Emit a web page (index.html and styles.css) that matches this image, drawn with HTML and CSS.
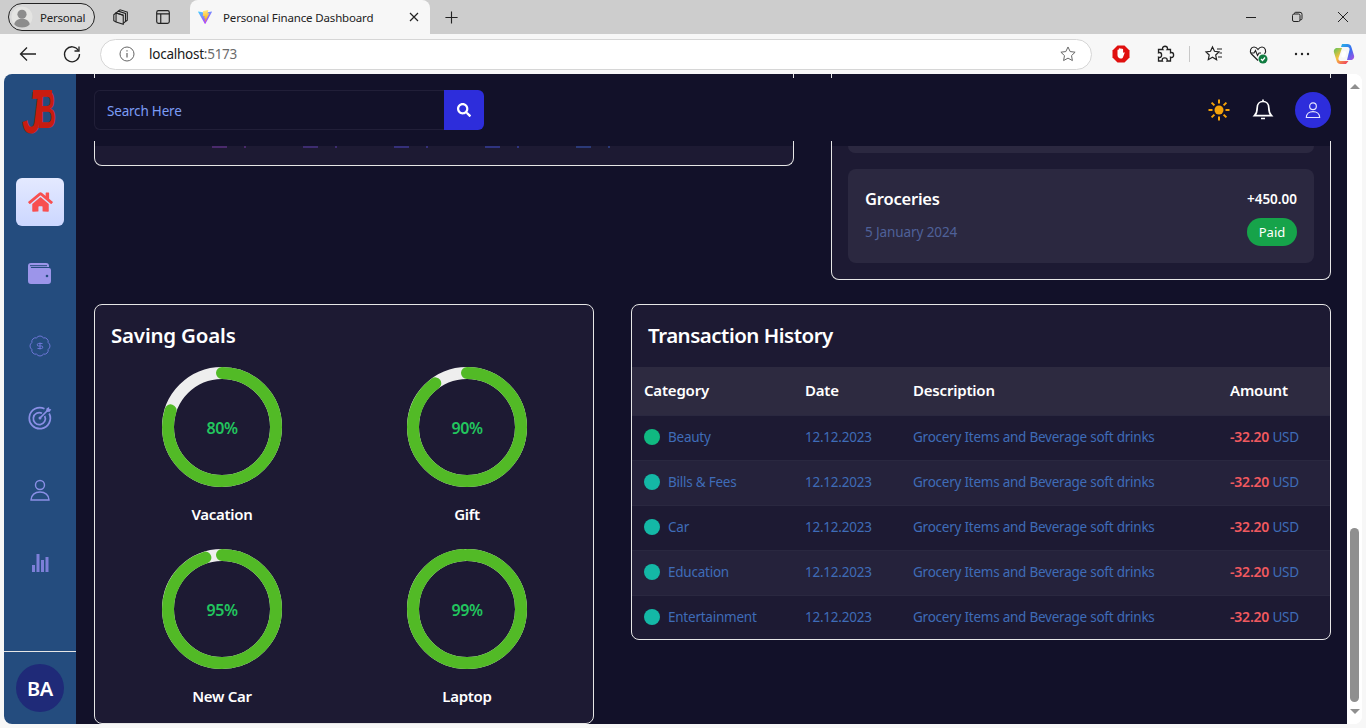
FILE: index.html
```html
<!DOCTYPE html>
<html>
<head>
    <title>Personal Finance Dashboard</title>
    <link rel="stylesheet" href="styles.css">
</head>
<body>
    <div class="tabstrip">
        <div class="profile">
            <svg class="profile-pic" viewBox="0 0 24 24"><circle cx="12" cy="12" r="11.5" fill="#e4e4e2"/><circle cx="12" cy="9" r="5" fill="#8c8c8c"/><path d="M3.5 20c1-4.500 4.500-6 8.500-6s7.500 1.500 8.500 6c-2 2.300-5 3.500-8.500 3.500s-6.500-1.200-8.500-3.500z" fill="#8c8c8c"/></svg>
            <span>Personal</span>
        </div>
        <svg class="strip-icon first" viewBox="0 0 20 20" fill="none" stroke="#222" stroke-width="1.200"><path d="M7 3.500l2-1.500 8 2.500v9l-2 1.500"/><path d="M4.500 5.500l2.500-2 8 2.500v9l-2.500 2"/><path d="M2 7.500l2.500-2 8 2.500v10l-8-2.500-2.500-1.500z"/><path d="M12.500 8l-8-2.500v10"/></svg>
        <svg class="strip-icon second" viewBox="0 0 20 20" fill="none" stroke="#222" stroke-width="1.300"><rect x="3" y="3" width="14" height="14" rx="2"/><path d="M3 6.500h14M7.500 6.500V17"/></svg>
        <div class="tab">
            <svg class="vite" viewBox="0 0 32 32">
                <defs>
                    <linearGradient id="viteA" x1="0" y1="0" x2="0.6" y2="1"><stop offset="0" stop-color="#41d1ff"/><stop offset="1" stop-color="#bd34fe"/></linearGradient>
                    <linearGradient id="viteB" x1="0.4" y1="0" x2="0.5" y2="1"><stop offset="0" stop-color="#ffea83"/><stop offset="1" stop-color="#ffa800"/></linearGradient>
                </defs>
                <path fill="url(#viteA)" d="M29.880 6.146 16.810 29.510a.71.71 0 0 1-1.240.005L2.240 6.150a.71.71 0 0 1 .74-1.050l13.080 2.340a.71.71 0 0 0 .25 0L29.140 5.100a.71.71 0 0 1 .74 1.050Z"/>
                <path fill="url(#viteB)" d="M22.264 2.007 12.540 3.912a.357.357 0 0 0-.288.33l-.598 10.104a.357.357 0 0 0 .437.369l2.707-.625c.254-.058.484.165.432.42l-.804 3.939a.357.357 0 0 0 .453.413l1.672-.508c.26-.079.509.15.454.415l-1.279 6.187c-.08.387.435.598.65.266l.143-.222 7.925-15.815c.133-.265-.096-.567-.387-.51l-2.787.537a.357.357 0 0 1-.41-.45l1.818-6.306a.357.357 0 0 0-.414-.45Z"/>
            </svg>
            <span class="tab-title">Personal Finance Dashboard</span>
            <svg class="tab-close" viewBox="0 0 12 12" fill="none" stroke="#222" stroke-width="1.200"><path d="M2 2l8 8M10 2l-8 8"/></svg>
        </div>
        <svg class="new-tab" viewBox="0 0 16 16" fill="none" stroke="#222" stroke-width="1.200"><path d="M8 1.500v13M1.500 8h13"/></svg>
        <div class="win-controls">
            <div class="win-btn"><svg viewBox="0 0 12 12" fill="none" stroke="#222"><path d="M1 6.500h10"/></svg></div>
            <div class="win-btn"><svg viewBox="0 0 12 12" fill="none" stroke="#222"><rect x="1.500" y="3" width="7.500" height="7.500" rx="1.500"/><path d="M3.500 3V2.500a1.200 1.200 0 0 1 1.200-1.200h4.300a2 2 0 0 1 2 2v4.300a1.200 1.200 0 0 1-1.200 1.200H9"/></svg></div>
            <div class="win-btn"><svg viewBox="0 0 12 12" fill="none" stroke="#222"><path d="M1 1l10 10M11 1L1 11"/></svg></div>
        </div>
    </div>

    <div class="toolbar">
        <div class="tool-btn"><svg viewBox="0 0 20 20" fill="none" stroke="#222" stroke-width="1.300"><path d="M18 10H2.500M9 3.500L2.500 10 9 16.500"/></svg></div>
        <div class="tool-btn"><svg viewBox="0 0 20 20" fill="none" stroke="#222" stroke-width="1.300"><path d="M16.500 6.500A7.500 7.500 0 1 0 17.500 10"/><path d="M17 2.500v4.500h-4.500"/></svg></div>
        <div class="address">
            <svg class="info" viewBox="0 0 16 16" fill="none" stroke="#666" stroke-width="1"><circle cx="8" cy="8" r="7"/><path d="M8 7v4.500" stroke-width="1.200"/><path d="M8 4.300v1.200" stroke-width="1.200"/></svg>
            <span class="host">localhost<span class="port">:5173</span></span>
            <svg class="star" viewBox="0 0 20 20" fill="none" stroke="#666" stroke-width="1.100"><path d="M10 2.200l2.400 5.100 5.500.7-4 3.800 1 5.500-4.900-2.700-4.900 2.700 1-5.500-4-3.800 5.500-.7z"/></svg>
        </div>
        <div class="tool-group">
            <div class="tool-btn"><svg viewBox="0 0 20 20"><path fill="#e0100f" d="M6.500 1.500h7l5 5v7l-5 5h-7l-5-5v-7z"/><path fill="#fff" d="M6.500 9.500V6.200c0-1 1.300-1 1.300 0V5c0-1 1.400-1 1.400 0 0-1 1.500-1 1.500 0v.5c0-1 1.400-1 1.400 0V9c.5-1 1.800-1.200 1.500 0l-1.500 4c-.4 1-1 1.500-2.200 1.500H9.500c-1.500 0-3-1.500-3-3.200z"/></svg></div>
            <div class="tool-btn"><svg viewBox="0 0 20 20" fill="none" stroke="#222" stroke-width="1.300"><path d="M7.500 4.500c0-3 5-3 5 0 0 .5 0 .8-.2 1h3.200v3.200c.3-.2.6-.2 1-.2 2.800 0 2.800 5 0 5-.4 0-.7 0-1-.2v3.700h-3.500c.2-.3.2-.6.2-1 0-2.800-5-2.800-5 0 0 .4 0 .7.2 1H3.500v-3.700c.3.2.6.2 1 .2 2.800 0 2.800-5 0-5-.4 0-.7 0-1 .2V5.500h4.200c-.2-.2-.2-.5-.2-1z"/></svg></div>
            <span class="tool-sep"></span>
            <div class="tool-btn"><svg viewBox="0 0 20 20" fill="none" stroke="#222" stroke-width="1.200"><path d="M8.500 3l2 4.300 4.500.6-3.300 3.100.9 4.700-4.100-2.400-4.200 2.400.9-4.700L2 7.900l4.500-.6z"/><path d="M13 5h5M15.500 9H18M14 13h4"/></svg></div>
            <div class="tool-btn"><svg viewBox="0 0 20 20"><path fill="none" stroke="#222" stroke-width="1.200" d="M10 16.500L3.500 10C1 7 3 3 6 3c1.800 0 3 1 4 2.500C11 4 12.200 3 14 3c3 0 5 4 2.500 7"/><path fill="none" stroke="#222" stroke-width="1.100" d="M2.500 9h3.500l1.500-2.500 2 5 1.500-2.500h2"/><circle cx="15" cy="15" r="4.500" fill="#107c41"/><path fill="none" stroke="#fff" stroke-width="1.200" d="M13 15l1.500 1.500 2.500-3"/></svg></div>
            <div class="tool-btn"><svg viewBox="0 0 20 20" fill="#222"><circle cx="4" cy="10" r="1.200"/><circle cx="10" cy="10" r="1.200"/><circle cx="16" cy="10" r="1.200"/></svg></div>
            <div class="tool-btn last">
                <svg class="copilot" viewBox="0 0 22 22">
                    <defs>
                        <linearGradient id="copA" x1="0" y1="0" x2="1" y2="1"><stop offset="0" stop-color="#27b4e6"/><stop offset="0.55" stop-color="#3a6cf0"/><stop offset="1" stop-color="#b34fe0"/></linearGradient>
                        <linearGradient id="copB" x1="0" y1="0" x2="0.8" y2="1"><stop offset="0" stop-color="#5cc25a"/><stop offset="0.5" stop-color="#f6c23c"/><stop offset="1" stop-color="#f0485e"/></linearGradient>
                    </defs>
                    <path fill="url(#copA)" d="M9 1h5.500c2 0 3.200 1 3.800 2.800L21 12.500c.7 2.500-1 4.500-3.300 4.500H14l2.500-10c.4-1.600-.5-3-2-3H8z"/>
                    <path fill="url(#copB)" d="M13 21H7.500c-2 0-3.200-1-3.800-2.800L1 9.500C.3 7 2 5 4.300 5H9L5.500 15c-.5 1.600.5 3 2 3h8z"/>
                    <path fill="#fff" d="M11 8c1.500 0 2.400.9 2.200 2.300l-.5 2.400c-.3 1.300-1.200 1.900-2.400 1.900-1.500 0-2.200-1.100-2-2.400l.5-2.300C9 8.700 9.900 8 11 8z" opacity="0.9"/>
                </svg>
            </div>
        </div>
    </div>

    <div class="window">
        <aside class="sidebar">
            <div class="logo">
                <svg class="logo-mark" viewBox="0 0 36 50" fill="#c81c10">
                    <rect x="11" y="1" width="19" height="4"/>
                    <text class="logo-j" transform="translate(0,44) scale(0.62,1)">J</text>
                    <text class="logo-b" transform="translate(15,39) scale(0.5,1)">B</text>
                </svg>
            </div>
            <nav class="nav">
                <a class="nav-item active"><svg class="home-icon" viewBox="0 0 576 512" fill="#f84f50"><path d="M280.370 148.260L96 300.110V464a16 16 0 0 0 16 16l112.060-.29a16 16 0 0 0 15.920-16V368a16 16 0 0 1 16-16h64a16 16 0 0 1 16 16v95.640a16 16 0 0 0 16 16.050L464 480a16 16 0 0 0 16-16V300L295.670 148.260a12.190 12.190 0 0 0-15.300 0zM571.600 251.470L488 182.560V44.050a12 12 0 0 0-12-12h-56a12 12 0 0 0-12 12v72.610L318.470 43a48 48 0 0 0-61 0L4.340 251.470a12 12 0 0 0-1.600 16.900l25.500 31A12 12 0 0 0 45.150 301l235.220-193.740a12.190 12.190 0 0 1 15.300 0L530.900 301a12 12 0 0 0 16.900-1.600l25.500-31a12 12 0 0 0-1.700-16.930z"/></svg></a>
                <a class="nav-item"><svg class="nav-icon" viewBox="0 0 24 24"><path fill="#9c95ea" d="M3 1h15a3 3 0 0 1 3 3v1H3a1 1 0 0 0 0 1h18a2 2 0 0 1 2 2v11a3 3 0 0 1-3 3H3a3 3 0 0 1-3-3V4a3 3 0 0 1 3-3z"/><path fill="#244c7e" d="M2 3.200h17v1H2z"/><circle cx="19" cy="14" r="1.300" fill="#244c7e"/></svg></a>
                <a class="nav-item"><svg class="nav-icon" viewBox="0 0 24 24" fill="none" stroke="#6d76d6" stroke-width="1"><path d="M3.850 8.620a4 4 0 0 1 4.780-4.770 4 4 0 0 1 6.740 0 4 4 0 0 1 4.780 4.780 4 4 0 0 1 0 6.740 4 4 0 0 1-4.770 4.780 4 4 0 0 1-6.750 0 4 4 0 0 1-4.780-4.770 4 4 0 0 1 0-6.760Z"/><path d="M14.500 9.500h-4a1.200 1.200 0 1 0 0 2.500h3a1.200 1.200 0 1 1 0 2.500H9.500"/><path d="M12 15.500v-7"/></svg></a>
                <a class="nav-item"><svg class="nav-icon" viewBox="0 0 24 24" fill="none" stroke="#8a8fe6" stroke-width="1.700"><path d="M16.500 2.800A10.500 10.500 0 1 0 21.200 7.500"/><path d="M14 7.300A6 6 0 1 0 16.700 10"/><circle cx="12" cy="12" r="1.500" fill="#8a8fe6" stroke="none"/><path d="M12 12l8-8"/><path d="M18 6l.5-3.500L21 1l.300 2 2 .3-1.500 2.500z" fill="#8a8fe6" stroke="none"/></svg></a>
                <a class="nav-item"><svg class="nav-icon" viewBox="0 0 24 24" fill="none" stroke="#8a8fe6" stroke-width="1.400"><circle cx="12" cy="7" r="4.500"/><path d="M3 22c0-5 4-8 9-8s9 3 9 8z"/></svg></a>
                <a class="nav-item"><svg class="nav-icon" viewBox="0 0 24 24" fill="#7d7fd8"><rect x="4" y="15" width="3" height="7"/><rect x="8.500" y="4" width="3" height="18"/><rect x="13" y="10" width="3" height="12"/><rect x="17.500" y="7" width="3" height="15"/></svg></a>
            </nav>
            <div class="side-foot"><div class="side-avatar">BA</div></div>
        </aside>

        <div class="main">
            <header class="topbar">
                <span class="edge edge-a"></span>
                <span class="edge edge-b"></span>
                <span class="edge edge-c"></span>
                <span class="edge edge-d"></span>
                <div class="search">
                    <div class="search-input">Search Here</div>
                    <div class="search-btn"><svg viewBox="0 0 512 512" fill="#fff"><path d="M505 442.700L405.300 343c-4.500-4.500-10.600-7-17-7H372c27.600-35.300 44-79.700 44-128C416 93.100 322.900 0 208 0S0 93.100 0 208s93.100 208 208 208c48.300 0 92.700-16.400 128-44v16.300c0 6.400 2.500 12.500 7 17l99.700 99.700c9.400 9.400 24.600 9.400 33.900 0l28.300-28.300c9.400-9.400 9.400-24.600.1-34zM208 336c-70.700 0-128-57.200-128-128 0-70.700 57.200-128 128-128 70.700 0 128 57.200 128 128 0 70.700-57.200 128-128 128z"/></svg></div>
                </div>
                <div class="top-actions">
                    <svg class="top-icon" viewBox="0 0 24 24" stroke="#f5a30a" stroke-width="2" fill="#f5a30a"><circle cx="12" cy="12" r="4.500" stroke="none"/><path d="M12 1.500v4M12 18.500v4M1.500 12h4M18.500 12h4M4.600 4.600l2.800 2.800M16.600 16.600l2.800 2.800M4.600 19.400l2.800-2.800M16.600 7.400l2.800-2.800"/></svg>
                    <svg class="top-icon" viewBox="0 0 24 24" fill="none" stroke="#fff" stroke-width="1.700"><path d="M12 3.500c-3.500 0-5.800 2.700-5.800 6.200 0 4-1 6.200-2.700 8h17c-1.700-1.800-2.700-4-2.700-8 0-3.500-2.300-6.200-5.800-6.200z"/><path d="M12 1.500v2M10 20.500h4"/></svg>
                    <div class="top-avatar"><svg viewBox="0 0 24 24" fill="none" stroke="#e6e6ff" stroke-width="1.400"><circle cx="12" cy="7.500" r="4"/><path d="M4 21c0-4.500 3.500-7 8-7s8 2.500 8 7z"/></svg></div>
                </div>
            </header>

            <main class="content">
                <div class="row row-top">
                    <section class="card chart-stub">
                        <div class="stub-marks">
                            <span class="mark m1"></span><span class="mark m2"></span><span class="mark m3"></span><span class="mark m4"></span><span class="mark m5"></span>
                        </div>
                    </section>
                    <section class="card bills">
                        <div class="bill-cut"></div>
                        <div class="bill">
                            <div class="bill-line">
                                <span class="bill-name">Groceries</span>
                                <span class="bill-amount">+450.00</span>
                            </div>
                            <div class="bill-line">
                                <span class="bill-date">5 January 2024</span>
                                <span class="pill">Paid</span>
                            </div>
                        </div>
                    </section>
                </div>

                <div class="row row-bottom">
                    <section class="card goals">
                        <h2 class="goals-title">Saving Goals</h2>
                        <div class="goal-grid">
                            <div class="goal">
                                <div class="ring">
                                    <svg viewBox="0 0 120 120"><circle class="ring-bg" cx="60" cy="60" r="54"/><circle class="ring-fg" cx="60" cy="60" r="54" pathLength="100" stroke-dasharray="80 100"/></svg>
                                    <span class="ring-val">80%</span>
                                </div>
                                <div class="goal-name">Vacation</div>
                            </div>
                            <div class="goal">
                                <div class="ring">
                                    <svg viewBox="0 0 120 120"><circle class="ring-bg" cx="60" cy="60" r="54"/><circle class="ring-fg" cx="60" cy="60" r="54" pathLength="100" stroke-dasharray="90 100"/></svg>
                                    <span class="ring-val">90%</span>
                                </div>
                                <div class="goal-name">Gift</div>
                            </div>
                            <div class="goal">
                                <div class="ring">
                                    <svg viewBox="0 0 120 120"><circle class="ring-bg" cx="60" cy="60" r="54"/><circle class="ring-fg" cx="60" cy="60" r="54" pathLength="100" stroke-dasharray="95 100"/></svg>
                                    <span class="ring-val">95%</span>
                                </div>
                                <div class="goal-name">New Car</div>
                            </div>
                            <div class="goal">
                                <div class="ring">
                                    <svg viewBox="0 0 120 120"><circle class="ring-bg" cx="60" cy="60" r="54"/><circle class="ring-fg" cx="60" cy="60" r="54" pathLength="100" stroke-dasharray="99 100"/></svg>
                                    <span class="ring-val">99%</span>
                                </div>
                                <div class="goal-name">Laptop</div>
                            </div>
                        </div>
                    </section>

                    <section class="card history">
                        <h2 class="history-title">Transaction History</h2>
                        <table class="tx-table">
                            <colgroup>
                                <col class="col-cat"><col class="col-date"><col class="col-desc"><col class="col-amt">
                            </colgroup>
                            <thead>
                                <tr><th>Category</th><th>Date</th><th>Description</th><th>Amount</th></tr>
                            </thead>
                            <tbody>
                                <tr>
                                    <td><span class="dot dot-green"></span>Beauty</td>
                                    <td>12.12.2023</td>
                                    <td>Grocery Items and Beverage soft drinks</td>
                                    <td><b class="neg">-32.20</b> USD</td>
                                </tr>
                                <tr>
                                    <td><span class="dot"></span>Bills &amp; Fees</td>
                                    <td>12.12.2023</td>
                                    <td>Grocery Items and Beverage soft drinks</td>
                                    <td><b class="neg">-32.20</b> USD</td>
                                </tr>
                                <tr>
                                    <td><span class="dot"></span>Car</td>
                                    <td>12.12.2023</td>
                                    <td>Grocery Items and Beverage soft drinks</td>
                                    <td><b class="neg">-32.20</b> USD</td>
                                </tr>
                                <tr>
                                    <td><span class="dot"></span>Education</td>
                                    <td>12.12.2023</td>
                                    <td>Grocery Items and Beverage soft drinks</td>
                                    <td><b class="neg">-32.20</b> USD</td>
                                </tr>
                                <tr>
                                    <td><span class="dot"></span>Entertainment</td>
                                    <td>12.12.2023</td>
                                    <td>Grocery Items and Beverage soft drinks</td>
                                    <td><b class="neg">-32.20</b> USD</td>
                                </tr>
                            </tbody>
                        </table>
                    </section>
                </div>
            </main>
        </div>

        <div class="scrollbar">
            <span class="arrow-up"></span>
            <span class="thumb"></span>
            <span class="arrow-down"></span>
        </div>
    </div>
</body>
</html>
```

FILE: styles.css
```css
* {
    box-sizing: border-box;
}

html, body {
    margin: 0;
    height: 728px;
    overflow: hidden;
}

body {
    font-family: "Noto Sans", "Open Sans", sans-serif;
    background-color: #f7f7f7;
    color: #fff;
    display: flex;
    flex-direction: column;
}

/* browser chrome */
.tabstrip {
    height: 34px;
    flex: none;
    background-color: #cdcdcd;
    display: flex;
    align-items: center;
    color: #222;
    font-size: 11.5px;
    letter-spacing: -0.15px;
}

.profile {
    width: 87px;
    height: 28px;
    margin-left: 8px;
    border: 1px solid #222;
    border-radius: 14px;
    display: flex;
    align-items: center;
    gap: 7px;
    padding-left: 2px;
    background-color: #d8d8d8;
    letter-spacing: -0.25px;
}

.profile-pic {
    width: 22px;
    height: 22px;
}

.strip-icon {
    width: 18px;
    height: 18px;
}

.strip-icon.first {
    margin-left: 17px;
}

.strip-icon.second {
    margin-left: 24px;
}

.tab {
    width: 240px;
    height: 34px;
    margin-left: 18px;
    background-color: #f7f7f7;
    border-radius: 8px 8px 0 0;
    display: flex;
    align-items: center;
    padding-left: 7px;
}

.vite {
    width: 16px;
    height: 16px;
}

.tab-title {
    margin-left: 10px;
    flex: 1;
}

.tab-close {
    width: 12px;
    height: 12px;
    margin-right: 10px;
}

.new-tab {
    width: 15px;
    height: 15px;
    margin-left: 14px;
}

.win-controls {
    margin-left: auto;
    display: flex;
}

.win-btn {
    width: 46px;
    height: 34px;
    display: flex;
    align-items: center;
    justify-content: center;
}

.win-btn svg {
    width: 12px;
    height: 12px;
}

.toolbar {
    height: 40px;
    flex: none;
    background-color: #f7f7f7;
    display: flex;
    align-items: center;
    padding: 0 2px 0 6px;
}

.tool-btn {
    width: 44px;
    height: 32px;
    display: flex;
    align-items: center;
    justify-content: center;
}

.tool-btn svg {
    width: 20px;
    height: 20px;
}

.tool-btn .copilot {
    width: 22px;
    height: 22px;
}

.tool-btn.last {
    width: 40px;
}

.address {
    flex: 1;
    height: 31px;
    margin-left: 6px;
    background-color: #fff;
    border: 1px solid #d6d6d6;
    border-radius: 16px;
    display: flex;
    align-items: center;
    padding: 0 14px 0 18px;
    font-size: 13.5px;
    letter-spacing: -0.25px;
    color: #1a1a1a;
}

.info {
    width: 16px;
    height: 16px;
}

.host {
    margin-left: 14px;
    flex: 1;
}

.port {
    color: #6b6b6b;
}

.star {
    width: 18px;
    height: 18px;
}

.tool-group {
    display: flex;
    align-items: center;
    margin-left: 7px;
}

.tool-sep {
    width: 1px;
    height: 16px;
    margin: 0 2px;
    background-color: #c8c8c8;
}

/* page */
.window {
    height: 650px;
    flex: none;
    margin: 0 4px;
    display: flex;
    background-color: #fff;
    border-radius: 8px;
    overflow: hidden;
}

.sidebar {
    width: 72px;
    flex: none;
    background-color: #244c7e;
    display: flex;
    flex-direction: column;
}

.logo {
    height: 104px;
    padding-top: 15px;
    display: flex;
    justify-content: center;
}

.logo-mark {
    width: 36px;
    height: 50px;
    overflow: visible;
}

.logo-j,
.logo-b {
    font-family: "Liberation Sans", sans-serif;
    font-weight: 700;
}

.logo-j {
    font-size: 60px;
    font-style: italic;
}

.logo-b {
    font-size: 53px;
}

.nav {
    display: flex;
    flex-direction: column;
    gap: 24px;
    padding: 0 12px;
}

.nav-item {
    height: 48px;
    display: flex;
    align-items: center;
    justify-content: center;
    border-radius: 6px;
}

.nav-item.active {
    background: linear-gradient(#e4e9ff, #ccd7ff);
}

.home-icon {
    width: 25px;
    height: 22px;
}

.nav-icon {
    width: 24px;
    height: 24px;
}

.side-foot {
    margin-top: auto;
    border-top: 1px solid #e6e6e6;
    padding: 12px;
}

.side-avatar {
    width: 48px;
    height: 48px;
    border-radius: 50%;
    background-color: #1f2a78;
    display: flex;
    align-items: center;
    justify-content: center;
    font-size: 20px;
    font-weight: 600;
    letter-spacing: -0.3px;
}

.main {
    flex: 1;
    min-width: 0;
    background-color: #121129;
    display: flex;
    flex-direction: column;
}

.topbar {
    height: 72px;
    flex: none;
    position: relative;
    display: flex;
    align-items: center;
    justify-content: space-between;
    padding: 0 16px 0 18px;
}

/* card borders peeking out above and below the sticky bar */
.edge {
    position: absolute;
    top: 0;
    width: 1px;
    height: 72px;
    background: linear-gradient(#e6e6e6 0 4px, transparent 4px 67px, #e6e6e6 67px);
}

.edge-a { left: 18px; }
.edge-b { left: 717px; }
.edge-c { left: 755px; }
.edge-d { left: 1254px; }

.search {
    display: flex;
    width: 390px;
    height: 40px;
}

.search-input {
    flex: 1;
    border: 1px solid #211f38;
    border-right: none;
    border-radius: 6px 0 0 6px;
    padding: 2px 0 0 12px;
    display: flex;
    align-items: center;
    font-size: 13.5px;
    letter-spacing: -0.2px;
    color: #7c9cf5;
}

.search-btn {
    width: 40px;
    background-color: #2d2ddb;
    border-radius: 0 6px 6px 0;
    display: flex;
    align-items: center;
    justify-content: center;
}

.search-btn svg {
    width: 14px;
    height: 14px;
}

.top-actions {
    display: flex;
    align-items: center;
    gap: 20px;
}

.top-icon {
    width: 24px;
    height: 24px;
}

.top-avatar {
    width: 36px;
    height: 36px;
    border-radius: 50%;
    background-color: #2d2ddb;
    display: flex;
    align-items: center;
    justify-content: center;
}

.top-avatar svg {
    width: 20px;
    height: 20px;
}

.content {
    padding: 0 16px 0 18px;
    display: flex;
    flex-direction: column;
    gap: 24px;
}

.row {
    display: grid;
    gap: 37px;
    align-items: start;
}

.row-top {
    grid-template-columns: 700px 500px;
}

.row-bottom {
    grid-template-columns: 500px 700px;
}

.card {
    background-color: #1d1a33;
    border: 1px solid #e6e6e6;
    border-radius: 8px;
}

.chart-stub {
    height: 20px;
    border-top: none;
    border-radius: 0 0 8px 8px;
}

.stub-marks {
    display: flex;
    gap: 57px;
    padding-left: 117px;
}

.mark {
    --mark: #4a2a6c;
    width: 34px;
    height: 2px;
    background: linear-gradient(to right, var(--mark) 0 15px, transparent 15px 32px, var(--mark) 32px);
}

.mark.m2 { --mark: #3d2c70; }
.mark.m3 { --mark: #35307a; }
.mark.m4 { --mark: #2f3480; }
.mark.m5 { --mark: #2b3a78; }

.bills {
    height: 134px;
    border-top: none;
    border-radius: 0 0 8px 8px;
    padding: 0 16px;
}

.bill-cut {
    height: 7px;
    background-color: #2b2840;
    border-radius: 0 0 8px 8px;
}

.bill {
    margin-top: 16px;
    height: 94px;
    background-color: #2b2840;
    border-radius: 8px;
    padding: 17px;
    display: flex;
    flex-direction: column;
    justify-content: space-between;
}

.bill-line {
    display: flex;
    align-items: center;
    justify-content: space-between;
}

.bill-name {
    line-height: 26px;
    font-size: 16.5px;
    font-weight: 600;
    letter-spacing: -0.2px;
}

.bill-amount {
    font-size: 13.5px;
    font-weight: 600;
}

.bill-date {
    font-size: 13.5px;
    letter-spacing: -0.1px;
    color: #4f6199;
}

.pill {
    width: 50px;
    height: 28px;
    border-radius: 14px;
    background-color: #16a34a;
    display: flex;
    align-items: center;
    justify-content: center;
    font-size: 13px;
}

.goals {
    height: 420px;
    padding: 16px;
}

.goals-title,
.history-title {
    margin: 0;
    height: 30px;
    line-height: 29px;
    font-weight: 600;
}

.goals-title {
    font-size: 20.5px;
    letter-spacing: -0.2px;
}

.history-title {
    font-size: 20.5px;
    letter-spacing: -0.5px;
    margin: 16px;
}

.goal-grid {
    margin-top: 16px;
    display: grid;
    grid-template-columns: 222px 222px;
    gap: 24px 23px;
}

.goal {
    display: flex;
    flex-direction: column;
    align-items: center;
}

.ring {
    width: 120px;
    height: 120px;
    position: relative;
}

.ring svg {
    display: block;
    width: 120px;
    height: 120px;
    transform: rotate(-90deg);
}

.ring-bg,
.ring-fg {
    fill: none;
    stroke-width: 12;
}

.ring-bg {
    stroke: #eeeeee;
}

.ring-fg {
    stroke: #52ba26;
    stroke-linecap: round;
}

.ring-val {
    position: absolute;
    inset: 2px 0 0 0;
    display: flex;
    align-items: center;
    justify-content: center;
    font-size: 16px;
    font-weight: 600;
    letter-spacing: -0.4px;
    color: #22c55e;
}

.goal-name {
    margin-top: 16px;
    height: 22px;
    line-height: 22px;
    font-size: 15px;
    font-weight: 600;
    letter-spacing: -0.3px;
}

.history {
    height: 336px;
    overflow: hidden;
}

.tx-table {
    width: 100%;
    border-collapse: collapse;
    table-layout: fixed;
    font-size: 13.5px;
    letter-spacing: -0.24px;
}

.col-cat { width: 161px; }
.col-date { width: 108px; }
.col-desc { width: 317px; }

.tx-table th {
    height: 48px;
    padding: 0 12px 2px;
    background-color: #2d2a40;
    text-align: left;
    font-size: 15px;
    font-weight: 600;
    letter-spacing: -0.2px;
}

.tx-table td {
    height: 45px;
    padding: 0 12px 2px;
    color: #3f6cb8;
    border-top: 1px solid #2a2840;
    white-space: nowrap;
}

.tx-table tbody tr:nth-child(even) {
    background-color: #25223b;
}

.dot {
    display: inline-block;
    width: 16px;
    height: 16px;
    margin-right: 8px;
    border-radius: 50%;
    background-color: #14b8a6;
    vertical-align: -3px;
}

.dot-green {
    background-color: #10b981;
}

.neg {
    color: #f0595f;
    font-size: 14px;
    font-weight: 600;
    letter-spacing: -0.2px;
}

.scrollbar {
    width: 15px;
    flex: none;
    background-color: #fff;
    display: flex;
    flex-direction: column;
    align-items: center;
    padding: 10px 0;
}

.arrow-up,
.arrow-down {
    width: 0;
    height: 0;
    border-left: 5px solid transparent;
    border-right: 5px solid transparent;
}

.arrow-up {
    border-bottom: 5px solid #8f8f8f;
}

.arrow-down {
    border-top: 5px solid #8f8f8f;
}

.thumb {
    width: 9px;
    height: 174px;
    margin: auto 0 7px;
    background-color: #8f8f8f;
    border-radius: 5px;
}
```
